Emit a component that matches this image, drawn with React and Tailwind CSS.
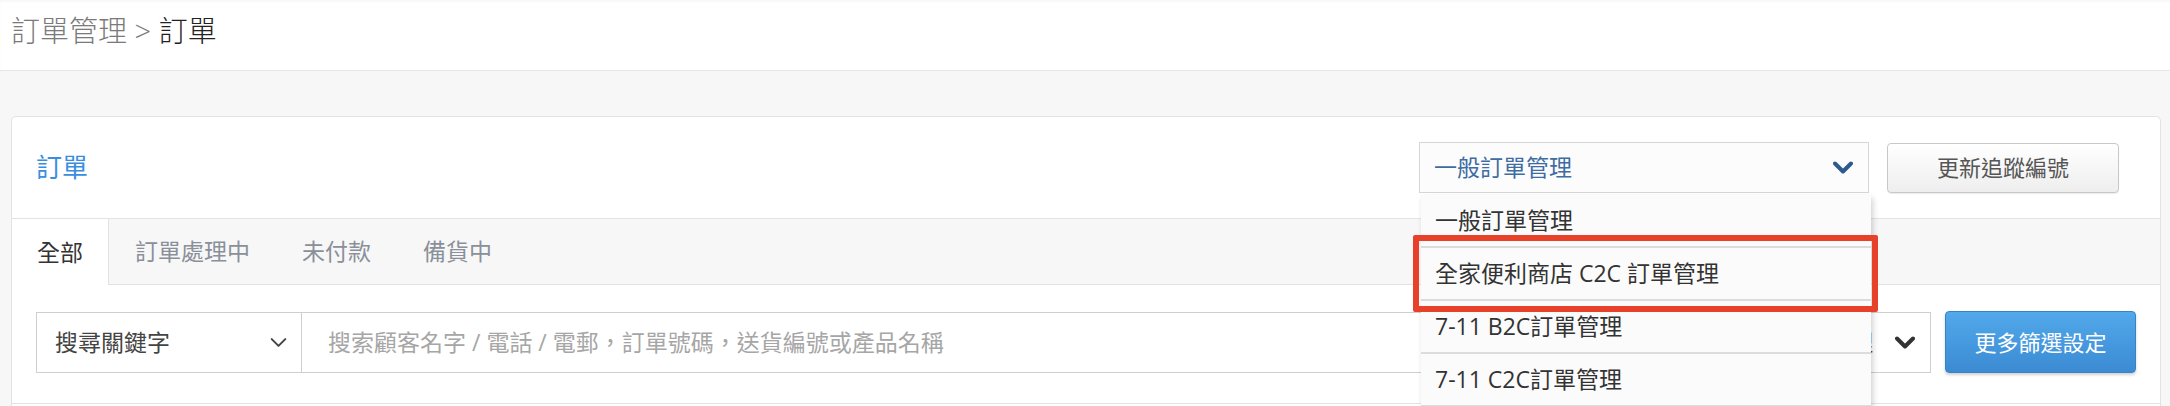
import React from "react";

const font = "font-['Open_Sans','Noto_Sans_CJK_TC',sans-serif]";

const Chevron = ({ className, stroke = 4 }) => (
  <svg viewBox="0 0 20 13" className={className} fill="none">
    <path d="M2 2.5 L10 10.5 L18 2.5" stroke="currentColor" strokeWidth={stroke} strokeLinecap="round" strokeLinejoin="round" />
  </svg>
);

const tabs = ["全部", "訂單處理中", "未付款", "備貨中"];

const options = [
  "一般訂單管理",
  "全家便利商店 C2C 訂單管理",
  "7-11 B2C訂單管理",
  "7-11 C2C訂單管理",
];

const OrderTypeSelect = () => (
  <div className="relative w-[450px]">
    <div className="flex h-[51px] items-center justify-between border border-[#d6d6d6] bg-[#fcfcfc] pl-[14px] pr-[15px]">
      <span className="text-[23px] text-[#3e6ca3]">一般訂單管理</span>
      <Chevron className="h-[13px] w-[20px] text-[#2d5b8e]" />
    </div>

    {/* open option list */}
    <div className="absolute left-[2px] top-[53px] z-10 w-[450px] bg-[#fbfbfb] shadow-[2px_3px_6px_rgba(0,0,0,0.18)]">
      {options.map((o) => (
        <div
          key={o}
          className="flex h-[53px] items-center border-b-[2px] border-[#dcdcdc] pl-[14px] text-[23px] text-[#333]"
        >
          {o}
        </div>
      ))}
    </div>

    {/* highlight around the second option */}
    <div className="pointer-events-none absolute left-[-6px] top-[93px] z-20 h-[77px] w-[465px] rounded-[2px] border-[6px] border-[#e8412a]" />
  </div>
);

export default function App() {
  return (
    <div className={`h-[406px] w-full overflow-hidden bg-[#f7f7f7] ${font}`}>
      {/* breadcrumb */}
      <div className="h-[71px] border-b border-[#e6e6e6] bg-white px-[11px] pt-[10px] shadow-[inset_0_2px_2px_rgba(0,0,0,0.03)]">
        <p className="text-[29px] font-light leading-[42px] text-[#7a7a7a]">
          訂單管理 &gt; <span className="text-[#222]">訂單</span>
        </p>
      </div>

      <div className="ml-[11px] mr-[9px] mt-[45px] rounded-[5px] border border-[#e3e3e3] bg-white">
        {/* card header */}
        <div className="flex h-[102px] items-center justify-between border-b border-[#e3e3e3] pl-[24px] pr-[41px]">
          <h2 className="text-[26px] text-[#3a8ee0]">訂單</h2>
          <div className="flex items-center gap-[18px]">
            <OrderTypeSelect />
            <button className="h-[50px] w-[232px] rounded-[4px] border border-[#c8c8c8] bg-gradient-to-b from-white to-[#eeeeee] text-[22px] text-[#555] shadow-[0_1px_1px_rgba(0,0,0,0.08)]">
              更新追蹤編號
            </button>
          </div>
        </div>

        {/* tabs */}
        <div className="flex h-[66px] bg-[#f7f7f7]">
          {tabs.map((t, i) =>
            i === 0 ? (
              <div key={t} className="flex items-center border-r border-[#e3e3e3] bg-white px-[25px] text-[23px] text-[#333]">
                {t}
              </div>
            ) : (
              <div key={t} className="flex items-center border-b border-[#e3e3e3] px-[26px] text-[23px] text-[#8a909a]">
                {t}
              </div>
            )
          )}
          <div className="flex-1 border-b border-[#e3e3e3]" />
        </div>

        {/* search row */}
        <div className="flex items-center gap-[14px] border-b border-[#e3e3e3] px-[24px] pb-[30px] pt-[26px]">
          <div className="flex h-[61px] flex-1 border border-[#cfcfcf]">
            <div className="flex w-[265px] items-center justify-between border-r border-[#cfcfcf] pl-[18px] pr-[14px]">
              <span className="text-[23px] text-[#444]">搜尋關鍵字</span>
              <Chevron className="h-[11px] w-[17px] text-[#444]" stroke={2.4} />
            </div>
            <input
              className="min-w-0 flex-1 bg-transparent pl-[26px] text-[23px] text-[#444] outline-none placeholder:text-[#a6a6a6]"
              placeholder="搜索顧客名字 / 電話 / 電郵，訂單號碼，送貨編號或產品名稱"
            />
            <div className="flex w-[300px] items-center justify-end gap-[22px] border-l border-[#cfcfcf] pr-[15px]">
              <span className="text-[23px] text-[#444]">全部處理</span>
              <Chevron className="h-[13px] w-[20px] text-[#333]" />
            </div>
          </div>
          <button className="h-[62px] w-[191px] rounded-[4px] border border-[#3584c9] bg-gradient-to-b from-[#52a9eb] to-[#3b8bd3] text-[22px] text-white shadow-[0_2px_3px_rgba(0,0,0,0.18)]">
            更多篩選設定
          </button>
        </div>

        <div className="h-[60px] bg-white" />
      </div>
    </div>
  );
}
